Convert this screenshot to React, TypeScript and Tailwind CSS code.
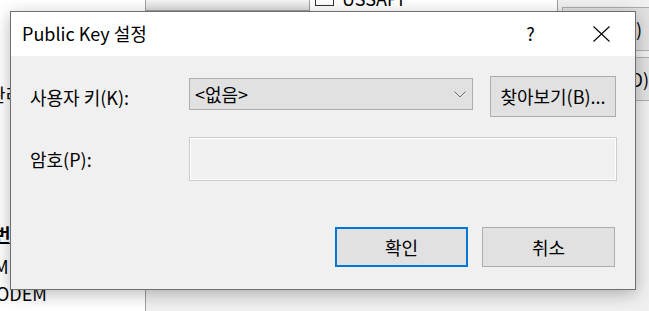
import React from "react";

const font = { fontFamily: '"Noto Sans CJK KR", "Noto Sans", sans-serif' };

export default function App() {
  return (
    <div className="relative w-[649px] h-[311px] overflow-hidden bg-[#f0f0f0] text-black" style={font}>
      {/* background window content */}
      <div className="flex w-full h-full">
        <div className="shrink-0 w-[146px] h-full bg-white border-r border-[#a0a0a0] flex flex-col overflow-hidden text-[18px] leading-[20px]">
          <div className="mt-[84px] -ml-[11px] whitespace-nowrap">관리</div>
          <div className="mt-[120px] -ml-[6px] whitespace-nowrap font-bold"><span className="underline">번</span>:</div>
          <div className="mt-[12px] -ml-[6px] whitespace-nowrap">M</div>
          <div className="mt-[7px] -ml-[4px] whitespace-nowrap">ODEM</div>
        </div>
        <div className="flex-1 min-w-0 h-full flex flex-col">
          <div className="flex h-[200px]">
            <div className="shrink-0 w-[163px] h-[11px] bg-gradient-to-b from-[#f4f4f4] to-[#dcdcdc] border-b border-[#a0a0a0]"></div>
            <div className="shrink-0 w-[248px] h-full bg-white border-l border-[#a0a0a0] flex items-start pl-[5px] -mt-[10px]">
              <div className="shrink-0 w-[19px] h-[16px] border border-[#333] bg-white"></div>
              <span className="ml-[8px] text-[18px] leading-[16px]">USSAPI</span>
            </div>
            <div className="flex-1 min-w-0 h-full bg-[#f0f0f0] border-l border-[#a0a0a0] flex flex-col items-start pl-[4px]">
              <div className="shrink-0 mt-[7px] w-[110px] h-[44px] bg-[#e1e1e1] border border-[#adadad] flex items-center justify-end pr-[29px] text-[18px] whitespace-nowrap">(M)</div>
              <div className="shrink-0 mt-[6px] w-[110px] h-[44px] bg-[#e1e1e1] border border-[#adadad] flex items-center justify-end pr-[22px] text-[18px] whitespace-nowrap">(D)</div>
            </div>
          </div>
        </div>
      </div>

      {/* dialog */}
      <div className="absolute left-[10px] top-[11px] w-[626px] h-[279px] border border-[#6f6f6f] bg-[#f0f0f0] flex flex-col shadow-[0_4px_16px_rgba(0,0,0,0.28)]">
        <div className="h-[44px] bg-white flex items-center">
          <div className="flex-1 pl-[11px] text-[18px] leading-[24px] pb-[2px]">Public Key 설정</div>
          <div className="w-[67px] h-full flex items-center justify-center pr-[8px] text-[18px] leading-[24px] pb-[2px]">?</div>
          <div className="w-[67px] h-full flex items-center justify-center">
            <svg width="17" height="16" viewBox="0 0 17 16" className="mb-[1px]">
              <path d="M0.5 0.5 L16.5 15.5 M16.5 0.5 L0.5 15.5" stroke="#000" strokeWidth="1.1" fill="none" />
            </svg>
          </div>
        </div>
        <div className="flex-1 flex flex-col pl-[19px] pr-[20px] pt-[20px] text-[18px] leading-[24px]">
          <div className="flex items-start h-[41px]">
            <div className="shrink-0 w-[159px] mt-[9px]">사용자 키(K):</div>
            <div className="shrink-0 mt-[2px] w-[284px] h-[32px] bg-[#e1e1e1] border border-[#adadad] flex items-center pl-[5px] pr-[6px]">
              <span className="flex-1 pb-[1px]">&lt;없음&gt;</span>
              <svg width="12" height="7" viewBox="0 0 12 7">
                <path d="M0.5 0.5 L6 6 L11.5 0.5" stroke="#6a6a6a" strokeWidth="1" fill="none" />
              </svg>
            </div>
            <div className="shrink-0 ml-[17px] w-[126px] h-[41px] bg-[#e1e1e1] border border-[#adadad] flex items-center justify-center pb-[1px] whitespace-nowrap">찾아보기(B)...</div>
          </div>
          <div className="flex items-center mt-[20px] h-[44px]">
            <div className="shrink-0 w-[159px]">암호(P):</div>
            <div className="shrink-0 w-[428px] h-[44px] bg-[#f0f0f0] border border-[#cccccc] shadow-[inset_0_0_0_1px_#ffffff]"></div>
          </div>
          <div className="flex justify-end mt-[46px]">
            <div className="w-[133px] h-[40px] bg-[#e1e1e1] border-2 border-[#0078d7] flex items-center justify-center pb-[1px]">확인</div>
            <div className="ml-[14px] w-[133px] h-[40px] bg-[#e1e1e1] border border-[#adadad] flex items-center justify-center pb-[1px]">취소</div>
          </div>
        </div>
      </div>
    </div>
  );
}
